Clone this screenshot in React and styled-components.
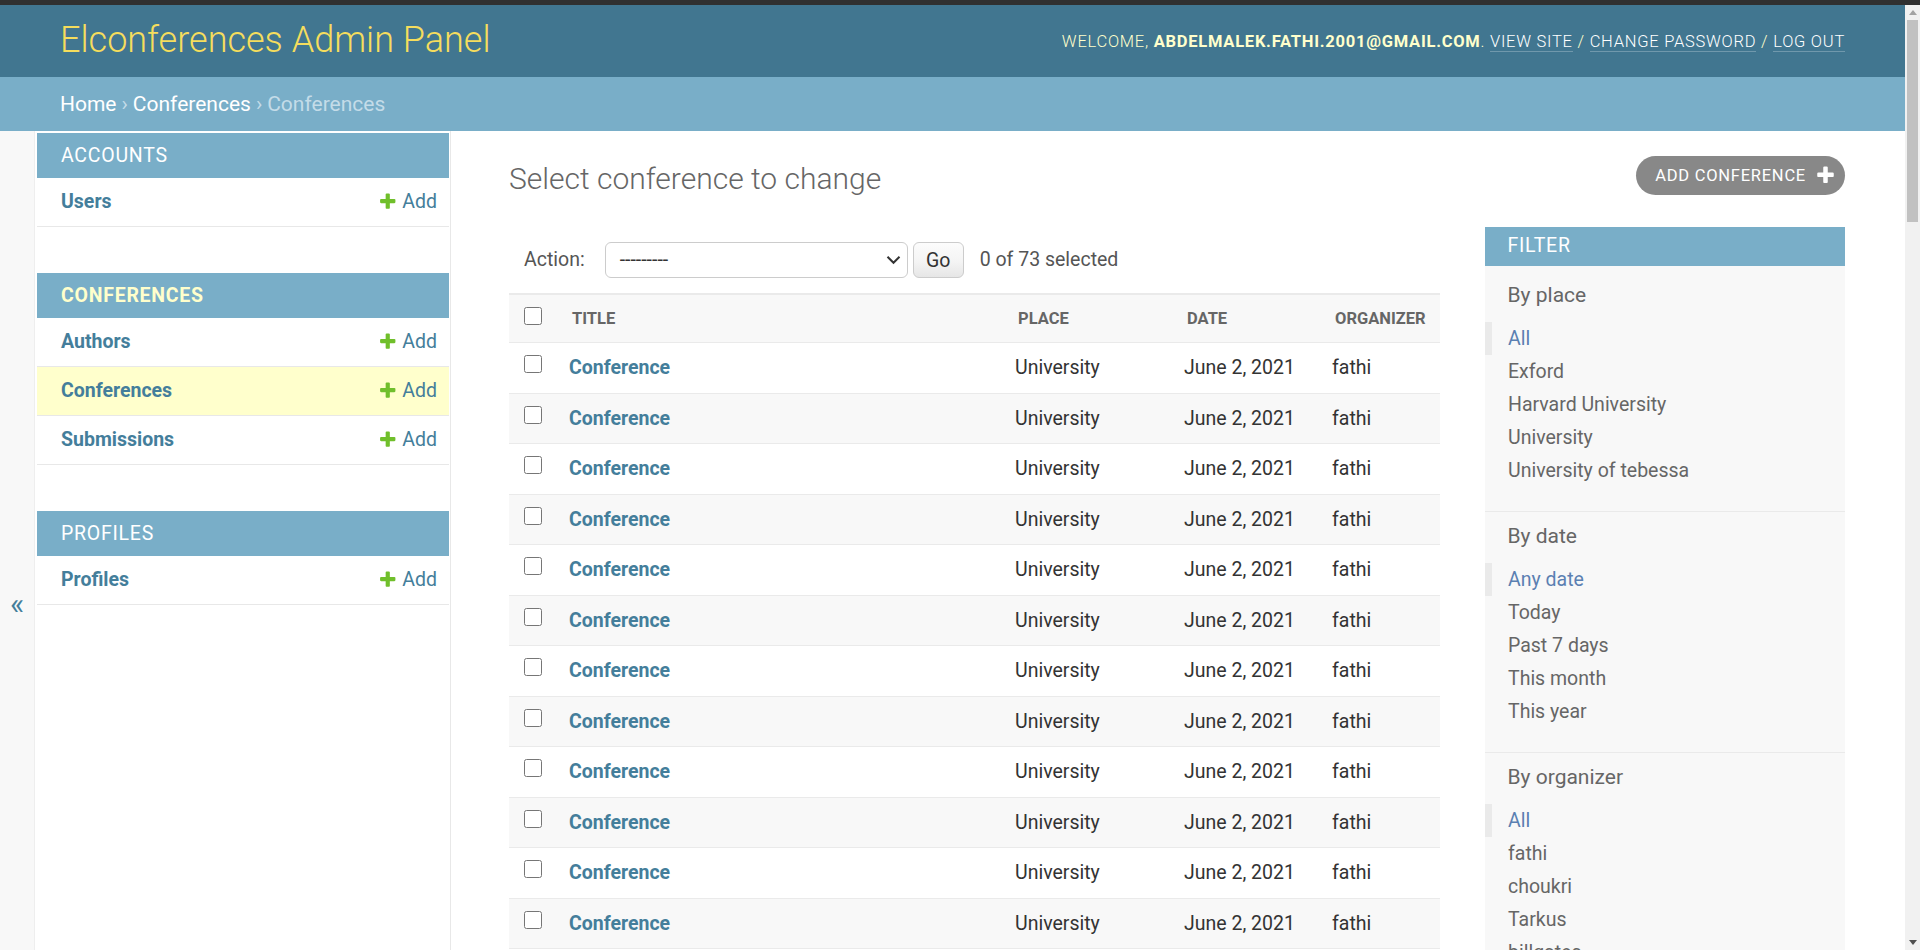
import React from 'react';
import styled, { createGlobalStyle } from 'styled-components';

const GlobalStyle = createGlobalStyle`
  html, body {
    margin: 0;
    padding: 0;
  }
  body {
    font-family: Roboto, "Liberation Sans", Arial, sans-serif;
    color: #333;
    background: #fff;
    overflow: hidden;
  }
  *, *::before, *::after {
    box-sizing: border-box;
  }
  a {
    text-decoration: none;
  }
`;

const Frame = styled.div`
  height: 950px;
  display: flex;
  flex-direction: column;
  overflow: hidden;
`;

const WindowStrip = styled.div`
  flex: none;
  height: 5px;
  background: #303030;
`;

const Viewport = styled.div`
  flex: 1;
  display: flex;
  min-height: 0;
`;

const Page = styled.div`
  flex: 1;
  min-width: 0;
  overflow: hidden;
`;

/* header */
const Header = styled.header`
  display: flex;
  justify-content: space-between;
  align-items: center;
  height: 72px;
  padding: 0 60px;
  background: #417690;
  color: #ffc;
`;

const Branding = styled.h1`
  margin: 0;
  font-size: 36px;
  font-weight: 300;
  line-height: 1.2;
  color: #f5dd5d;
`;

const UserTools = styled.div`
  font-size: 16.5px;
  font-weight: 300;
  letter-spacing: 0.75px;
  text-transform: uppercase;
  color: #ffc;
  strong {
    font-weight: 700;
  }
`;

const ToolLink = styled.a`
  color: #fff;
  border-bottom: 1.5px solid rgba(255, 255, 255, 0.25);
`;

const Breadcrumbs = styled.div`
  display: flex;
  align-items: center;
  gap: 5px;
  height: 54px;
  padding: 0 60px;
  background: #79aec8;
  color: #c4dce8;
  font-size: 21px;
  a {
    color: #fff;
  }
`;

/* main area */
const Main = styled.div`
  display: flex;
  align-items: stretch;
`;

const ToggleBar = styled.div`
  flex: 0 0 35px;
  display: flex;
  align-items: flex-start;
  background: #f8f8f8;
  border-right: 1px solid #eee;
`;

const ToggleButton = styled.div`
  width: 100%;
  height: 950px;
  padding-bottom: 6px;
  display: flex;
  align-items: center;
  justify-content: center;
  font-size: 30px;
  color: #447e9b;
`;

const Sidebar = styled.nav`
  flex: 0 0 416px;
  padding: 2px 1px 0 2px;
  border-right: 1px solid #e8e8e8;
  background: #fff;
`;

const Module = styled.div`
  margin-bottom: 46px;
`;

const Caption = styled.div`
  padding: 12px 24px;
  line-height: 21px;
  font-size: 19.5px;
  letter-spacing: 0.75px;
  text-transform: uppercase;
  background: #79aec8;
  color: ${(p) => (p.current ? '#ffc' : '#fff')};
  font-weight: ${(p) => (p.current ? 700 : 400)};
`;

const ModelRow = styled.div`
  display: flex;
  justify-content: space-between;
  align-items: center;
  padding: 12px 12px 12px 24px;
  line-height: 24px;
  font-size: 19.5px;
  border-bottom: 1px solid #e8e8e8;
  background: ${(p) => (p.current ? '#ffc' : '#fff')};
`;

const ModelLink = styled.a`
  color: #447e9b;
  font-weight: 700;
`;

const AddLink = styled.a`
  display: inline-flex;
  align-items: center;
  gap: 4.5px;
  color: #447e9b;
`;

const Content = styled.div`
  flex: 1;
  min-width: 0;
  padding: 30px 60px 0 58px;
`;

const TitleRow = styled.div`
  display: flex;
  justify-content: space-between;
  align-items: flex-start;
  margin-bottom: 30px;
`;

const PageTitle = styled.h1`
  margin: 0;
  font-size: 30px;
  font-weight: 300;
  line-height: 36px;
  color: #666;
`;

const ObjectTool = styled.a`
  margin-top: -5px;
  display: inline-flex;
  align-items: center;
  gap: 9px;
  height: 39px;
  padding: 0 9px 0 19px;
  border-radius: 20px;
  background: #888;
  color: #fff;
  font-size: 16.5px;
  letter-spacing: 0.75px;
  text-transform: uppercase;
`;

const Changelist = styled.div`
  display: flex;
  align-items: flex-start;
`;

const FormContainer = styled.div`
  flex: 1;
  min-width: 0;
`;

const ActionsBar = styled.div`
  display: flex;
  align-items: center;
  padding: 15px;
  line-height: 36px;
  font-size: 19.5px;
  color: #555;
`;

const ActionLabel = styled.label`
  margin-right: 20px;
`;

const SelectBox = styled.div`
  display: flex;
  align-items: center;
  justify-content: space-between;
  width: 303px;
  height: 36px;
  padding: 0 6px 0 14px;
  border: 1px solid #ccc;
  border-radius: 6px;
  background: #fff;
  color: #333;
  font-size: 19.5px;
`;

const GoButton = styled.button`
  margin-left: 5px;
  width: 51px;
  height: 36px;
  padding: 0;
  border: 1px solid #ccc;
  border-radius: 6px;
  background: linear-gradient(to bottom, #fcfcfc 0%, #f4f4f4 55%, #e6e6e6 100%);
  font-family: inherit;
  font-size: 19.5px;
  color: #333;
`;

const Counter = styled.span`
  margin-left: 16px;
`;

const ResultTable = styled.table`
  width: 100%;
  border-collapse: collapse;
  table-layout: fixed;
`;

const HeadCell = styled.th`
  padding: 12px 15px;
  line-height: 23px;
  font-size: 16.5px;
  font-weight: 700;
  text-align: left;
  text-transform: uppercase;
  color: #666;
  background: #f8f8f8;
  border-top: 2px solid #eaeaea;
  border-bottom: 1px solid #eaeaea;
  vertical-align: top;
  white-space: nowrap;
`;

const Row = styled.tr`
  background: ${(p) => (p.even ? '#f8f8f8' : '#fff')};
`;

const Cell = styled.td`
  padding: 12px;
  line-height: 25.5px;
  font-size: 19.5px;
  color: #333;
  border-bottom: 1px solid #eaeaea;
  vertical-align: top;
  white-space: nowrap;
`;

const CheckCell = styled(Cell)`
  padding: 12px 15px;
`;

const Check = styled.input`
  display: block;
  width: 18px;
  height: 18px;
  margin: 0;
`;

const TitleLink = styled.a`
  color: #447e9b;
  font-weight: 700;
`;

/* filter panel */
const Filter = styled.div`
  flex: 0 0 360px;
  margin-left: 45px;
  background: #f8f8f8;
`;

const FilterTitle = styled.h2`
  margin: 0 0 17.5px;
  padding: 0 22.5px;
  height: 38.5px;
  line-height: 38.5px;
  font-size: 19.5px;
  font-weight: 400;
  letter-spacing: 0.75px;
  text-transform: uppercase;
  color: #fff;
  background: #79aec8;
`;

const FilterGroup = styled.div`
  padding-bottom: 23.5px;
  border-bottom: 1px solid #eaeaea;
`;

const GroupTitle = styled.h3`
  margin: 12.5px 0 14px;
  padding: 0 22.5px;
  font-size: 21px;
  font-weight: 400;
  line-height: 25px;
  color: #666;
`;

const FilterList = styled.ul`
  list-style: none;
  margin: 0;
  padding: 0;
`;

const FilterItem = styled.li`
  line-height: 33px;
  font-size: 19.5px;
  padding-left: ${(p) => (p.selected ? '16px' : '23px')};
  border-left: ${(p) => (p.selected ? '7px solid #eaeaea' : 'none')};
  color: ${(p) => (p.selected ? '#5b80b2' : '#666')};
`;

/* fake browser scrollbar */
const Scrollbar = styled.div`
  flex: 0 0 15px;
  display: flex;
  flex-direction: column;
  align-items: center;
  background: #f1f1f1;
`;

const ScrollArrow = styled.div`
  flex: none;
  height: 15px;
  width: 100%;
  display: flex;
  align-items: center;
  justify-content: center;
`;

const ScrollThumb = styled.div`
  flex: none;
  width: 11px;
  height: 202px;
  background: #c1c1c1;
`;

const ScrollSpace = styled.div`
  flex: 1;
`;

const PLUS =
  'M1600 736v192q0 40-28 68t-68 28h-416v416q0 40-28 68t-68 28h-192q-40 0-68-28t-28-68v-416h-416q-40 0-68-28t-28-68v-192q0-40 28-68t68-28h416v-416q0-40 28-68t68-28h192q40 0 68 28t28 68v416h416q40 0 68 28t28 68z';

const PlusIcon = ({ size, color }) => (
  <svg width={size} height={size} viewBox="0 0 1792 1792">
    <path fill={color} d={PLUS} />
  </svg>
);

const Chevron = () => (
  <svg width="15" height="10" viewBox="0 0 15 10">
    <path d="M1.5 1.8 L7.5 7.8 L13.5 1.8" fill="none" stroke="#333" strokeWidth="2" />
  </svg>
);

const Triangle = ({ up, color }) => (
  <svg width="8" height="5" viewBox="0 0 8 5">
    <path d={up ? 'M0 5 L4 0 L8 5 Z' : 'M0 0 L8 0 L4 5 Z'} fill={color} />
  </svg>
);

const apps = [
  { name: 'Accounts', models: ['Users'] },
  { name: 'Conferences', current: true, models: ['Authors', 'Conferences', 'Submissions'] },
  { name: 'Profiles', models: ['Profiles'] },
];

const filters = [
  {
    title: 'By place',
    items: ['All', 'Exford', 'Harvard University', 'University', 'University of tebessa'],
  },
  {
    title: 'By date',
    items: ['Any date', 'Today', 'Past 7 days', 'This month', 'This year'],
  },
  {
    title: 'By organizer',
    items: ['All', 'fathi', 'choukri', 'Tarkus', 'billgates'],
  },
];

// only the rows that fit in the window
const rows = Array.from({ length: 12 }, () => ({
  title: 'Conference',
  place: 'University',
  date: 'June 2, 2021',
  organizer: 'fathi',
}));

export default function App() {
  return (
    <>
      <GlobalStyle />
      <Frame>
        <WindowStrip />
        <Viewport>
          <Page>
            <Header>
              <Branding>Elconferences Admin Panel</Branding>
              <UserTools>
                Welcome, <strong>abdelmalek.fathi.2001@gmail.com</strong>.{' '}
                <ToolLink href="#">View site</ToolLink> /{' '}
                <ToolLink href="#">Change password</ToolLink> /{' '}
                <ToolLink href="#">Log out</ToolLink>
              </UserTools>
            </Header>
            <Breadcrumbs>
              <a href="#">Home</a>
              <span>›</span>
              <a href="#">Conferences</a>
              <span>›</span>
              <span>Conferences</span>
            </Breadcrumbs>

            <Main>
              <ToggleBar>
                <ToggleButton>«</ToggleButton>
              </ToggleBar>

              <Sidebar>
                {apps.map((app) => (
                  <Module key={app.name}>
                    <Caption current={app.current}>{app.name}</Caption>
                    {app.models.map((m) => (
                      <ModelRow key={m} current={app.current && m === 'Conferences'}>
                        <ModelLink href="#">{m}</ModelLink>
                        <AddLink href="#">
                          <PlusIcon size={19.5} color="#70bf2b" />
                          Add
                        </AddLink>
                      </ModelRow>
                    ))}
                  </Module>
                ))}
              </Sidebar>

              <Content>
                <TitleRow>
                  <PageTitle>Select conference to change</PageTitle>
                  <ObjectTool href="#">
                    Add conference
                    <PlusIcon size={21} color="#fff" />
                  </ObjectTool>
                </TitleRow>

                <Changelist>
                  <FormContainer>
                    <ActionsBar>
                      <ActionLabel>Action:</ActionLabel>
                      <SelectBox>
                        <span>---------</span>
                        <Chevron />
                      </SelectBox>
                      <GoButton>Go</GoButton>
                      <Counter>0 of 73 selected</Counter>
                    </ActionsBar>

                    <ResultTable>
                      <colgroup>
                        <col style={{ width: 48 }} />
                        <col style={{ width: 446 }} />
                        <col style={{ width: 169 }} />
                        <col style={{ width: 148 }} />
                        <col style={{ width: 120 }} />
                      </colgroup>
                      <thead>
                        <tr>
                          <HeadCell>
                            <Check type="checkbox" />
                          </HeadCell>
                          <HeadCell>Title</HeadCell>
                          <HeadCell>Place</HeadCell>
                          <HeadCell>Date</HeadCell>
                          <HeadCell>Organizer</HeadCell>
                        </tr>
                      </thead>
                      <tbody>
                        {rows.map((r, i) => (
                          <Row key={i} even={i % 2 === 1}>
                            <CheckCell>
                              <Check type="checkbox" />
                            </CheckCell>
                            <Cell>
                              <TitleLink href="#">{r.title}</TitleLink>
                            </Cell>
                            <Cell>{r.place}</Cell>
                            <Cell>{r.date}</Cell>
                            <Cell>{r.organizer}</Cell>
                          </Row>
                        ))}
                      </tbody>
                    </ResultTable>
                  </FormContainer>

                  <Filter>
                    <FilterTitle>Filter</FilterTitle>
                    {filters.map((f) => (
                      <FilterGroup key={f.title}>
                        <GroupTitle>{f.title}</GroupTitle>
                        <FilterList>
                          {f.items.map((item, i) => (
                            <FilterItem key={item} selected={i === 0}>
                              {item}
                            </FilterItem>
                          ))}
                        </FilterList>
                      </FilterGroup>
                    ))}
                  </Filter>
                </Changelist>
              </Content>
            </Main>
          </Page>

          <Scrollbar>
            <ScrollArrow>
              <Triangle up color="#a3a3a3" />
            </ScrollArrow>
            <ScrollThumb />
            <ScrollSpace />
            <ScrollArrow>
              <Triangle color="#505050" />
            </ScrollArrow>
          </Scrollbar>
        </Viewport>
      </Frame>
    </>
  );
}
